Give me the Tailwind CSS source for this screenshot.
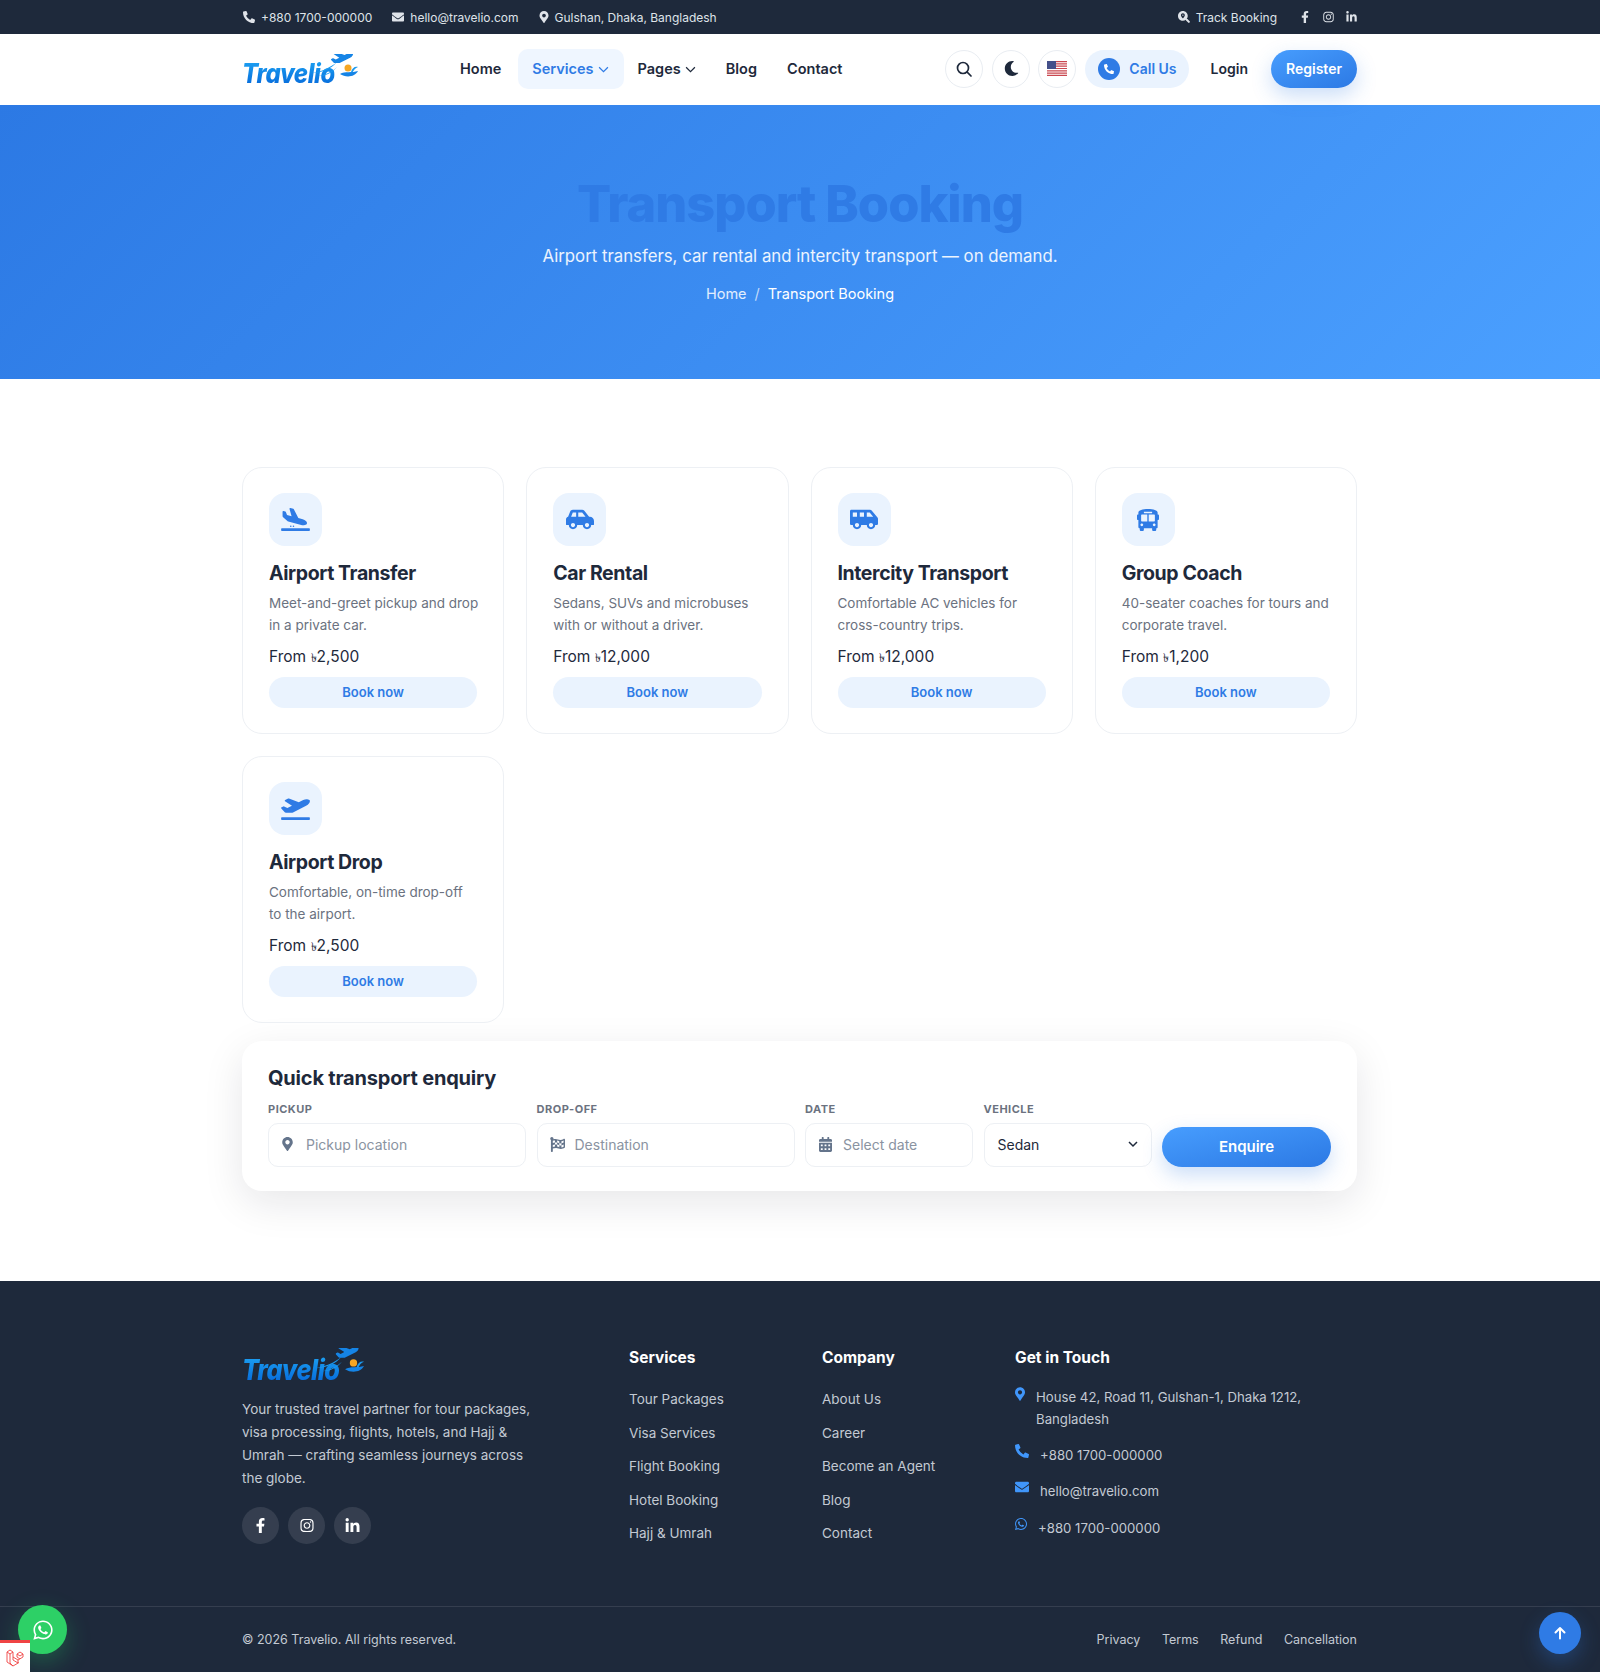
<!DOCTYPE html>
<html lang="en">

<head>
    <meta charset="UTF-8">
    <meta name="viewport" content="width=device-width, initial-scale=1.0">
    <title>Transport Booking - Travelio</title>
    <script src="https://cdn.jsdelivr.net/npm/@tailwindcss/browser@4"></script>
</head>

<body class="bg-white font-['Inter',sans-serif] text-[#1e293b] h-[1672px] overflow-hidden relative">
    <svg class="hidden">
        <symbol id="i-phone" viewBox="0 0 512 512"><path fill="currentColor" d="M497.39 361.8l-112-48a24 24 0 0 0-28 6.9l-49.6 60.6A370.66 370.66 0 0 1 130.6 204.11l60.6-49.6a23.94 23.94 0 0 0 6.9-28l-48-112A24.16 24.16 0 0 0 122.6.61l-104 24A24 24 0 0 0 0 48c0 256.5 207.9 464 464 464a24 24 0 0 0 23.4-18.6l24-104a24.29 24.29 0 0 0-14.01-27.6z"/></symbol>
        <symbol id="i-mail" viewBox="0 0 512 512"><path fill="currentColor" d="M502.3 190.8c3.9-3.1 9.7-.2 9.7 4.7V400c0 26.5-21.5 48-48 48H48c-26.5 0-48-21.5-48-48V195.6c0-5 5.7-7.8 9.7-4.7 22.4 17.4 52.1 39.5 154.1 113.6 21.1 15.4 56.7 47.8 92.2 47.6 35.7.3 72-32.8 92.3-47.6 102-74.1 131.6-96.3 154-113.7zM256 320c23.2.4 56.6-29.2 73.4-41.4 132.7-96.3 142.8-104.7 173.4-128.7 5.8-4.5 9.2-11.5 9.2-18.9v-19c0-26.5-21.5-48-48-48H48C21.5 64 0 85.5 0 112v19c0 7.4 3.4 14.3 9.2 18.9 30.6 23.9 40.7 32.4 173.4 128.7 16.8 12.2 50.2 41.8 73.4 41.4z"/></symbol>
        <symbol id="i-pin" viewBox="0 0 384 512"><path fill="currentColor" d="M172.268 501.67C26.97 291.031 0 268.413 0 192 0 85.961 85.961 0 192 0s192 85.961 192 192c0 76.413-26.97 99.031-172.268 309.67-9.535 13.774-29.93 13.773-39.464 0zM192 272c44.183 0 80-35.817 80-80s-35.817-80-80-80-80 35.817-80 80 35.817 80 80 80z"/></symbol>
        <symbol id="i-track" viewBox="0 0 512 512"><path fill="currentColor" d="M505 442.7L405.3 343c-4.5-4.5-10.6-7-17-7H372c27.6-35.3 44-79.7 44-128C416 93.1 322.9 0 208 0S0 93.1 0 208s93.1 208 208 208c48.3 0 92.7-16.4 128-44v16.3c0 6.4 2.5 12.5 7 17l99.7 99.7c9.4 9.4 24.6 9.4 33.9 0l28.3-28.3c9.4-9.4 9.4-24.6.1-34z"/><path fill="#1e293b" d="M208 96c-46 0-84 37-84 83 0 38 56 106 76 130a10 10 0 0 0 16 0c20-24 76-92 76-130 0-46-38-83-84-83zm0 110a27 27 0 1 1 0-54 27 27 0 0 1 0 54z"/></symbol>
        <symbol id="i-fb" viewBox="0 0 320 512"><path fill="currentColor" d="M279.14 288l14.22-92.66h-88.91v-60.13c0-25.35 12.42-50.06 52.24-50.06h40.42V6.26S260.43 0 225.36 0c-73.22 0-121.08 44.38-121.08 124.72v70.62H22.89V288h81.39v224h100.17V288z"/></symbol>
        <symbol id="i-ig" viewBox="0 0 448 512"><path fill="currentColor" d="M224.1 141c-63.6 0-114.9 51.3-114.9 114.9s51.3 114.9 114.9 114.9S339 319.5 339 255.9 287.7 141 224.1 141zm0 189.6c-41.1 0-74.7-33.5-74.7-74.7s33.5-74.7 74.7-74.7 74.7 33.5 74.7 74.7-33.6 74.7-74.7 74.7zm146.4-194.3c0 14.9-12 26.8-26.8 26.8-14.9 0-26.8-12-26.8-26.8s12-26.8 26.8-26.8 26.8 12 26.8 26.8zm76.1 27.2c-1.7-35.9-9.9-67.7-36.2-93.9-26.2-26.2-58-34.4-93.9-36.2-37-2.1-147.9-2.1-184.9 0-35.8 1.7-67.6 9.9-93.9 36.1s-34.4 58-36.2 93.9c-2.1 37-2.1 147.9 0 184.9 1.7 35.9 9.9 67.7 36.2 93.9s58 34.4 93.9 36.2c37 2.1 147.9 2.1 184.9 0 35.9-1.7 67.7-9.9 93.9-36.2 26.2-26.2 34.4-58 36.2-93.9 2.1-37 2.1-147.8 0-184.8zM398.8 388c-7.8 19.6-22.9 34.7-42.6 42.6-29.5 11.7-99.5 9-132.1 9s-102.7 2.6-132.1-9c-19.6-7.8-34.7-22.9-42.6-42.6-11.7-29.5-9-99.5-9-132.1s-2.6-102.7 9-132.1c7.8-19.6 22.9-34.7 42.6-42.6 29.5-11.7 99.5-9 132.1-9s102.7-2.6 132.1 9c19.6 7.8 34.7 22.9 42.6 42.6 11.7 29.5 9 99.5 9 132.1s2.7 102.7-9 132.1z"/></symbol>
        <symbol id="i-in" viewBox="0 0 448 512"><path fill="currentColor" d="M100.28 448H7.4V148.9h92.88zM53.79 108.1C24.09 108.1 0 83.5 0 53.8a53.79 53.79 0 0 1 107.58 0c0 29.7-24.1 54.3-53.79 54.3zM447.9 448h-92.68V302.4c0-34.7-.7-79.2-48.29-79.2-48.29 0-55.69 37.7-55.69 76.7V448h-92.78V148.9h89.08v40.8h1.3c12.4-23.5 42.69-48.3 87.88-48.3 94 0 111.28 61.9 111.28 142.3V448z"/></symbol>
        <symbol id="i-wa" viewBox="0 0 448 512"><path fill="currentColor" d="M380.9 97.1C339 55.1 283.2 32 223.9 32c-122.4 0-222 99.6-222 222 0 39.1 10.2 77.3 29.6 111L0 480l117.7-30.9c32.4 17.7 68.9 27 106.1 27h.1c122.3 0 224.1-99.6 224.1-222 0-59.3-25.2-115-67.1-157zm-157 341.6c-33.2 0-65.7-8.9-94-25.7l-6.7-4-69.8 18.3L72 359.2l-4.4-7c-18.5-29.4-28.2-63.3-28.2-98.2 0-101.7 82.8-184.5 184.6-184.5 49.3 0 95.6 19.2 130.4 54.1 34.8 34.9 56.2 81.2 56.1 130.5 0 101.8-84.9 184.6-186.6 184.6zm101.2-138.2c-5.5-2.8-32.8-16.2-37.9-18-5.1-1.9-8.8-2.8-12.5 2.8-3.7 5.6-14.3 18-17.6 21.8-3.2 3.7-6.5 4.2-12 1.4-32.6-16.3-54-29.1-75.5-66-5.7-9.8 5.7-9.1 16.3-30.3 1.8-3.7.9-6.9-.5-9.7-1.4-2.8-12.5-30.1-17.1-41.2-4.5-10.8-9.1-9.3-12.5-9.5-3.2-.2-6.9-.2-10.6-.2-3.7 0-9.7 1.4-14.8 6.9-5.1 5.6-19.4 19-19.4 46.3 0 27.3 19.9 53.7 22.6 57.4 2.8 3.7 39.1 59.7 94.8 83.8 35.2 15.2 49 16.5 66.6 13.9 10.7-1.6 32.8-13.4 37.4-26.4 4.6-13 4.6-24.1 3.2-26.4-1.3-2.5-5-3.9-10.5-6.6z"/></symbol>
        <symbol id="i-arrival" viewBox="0 0 640 512"><path fill="currentColor" d="M624 448H16c-8.84 0-16 7.16-16 16v32c0 8.84 7.16 16 16 16h608c8.84 0 16-7.16 16-16v-32c0-8.84-7.16-16-16-16zM44.81 205.66l88.74 80a62.607 62.607 0 0 0 25.47 13.93l287.6 78.35c26.48 7.21 54.56 8.72 81 1.36 29.67-8.27 43.44-21.21 47.25-35.71 3.83-14.5-1.73-32.71-23.37-54.96-19.28-19.82-44.35-32.79-70.83-40l-97.51-26.56L282.8 30.22c-1.51-5.81-5.95-10.35-11.66-11.91L206.05.58c-10.56-2.88-20.9 5.32-20.71 16.44l47.92 164.21-102.2-27.84-27.59-67.88c-1.93-4.89-6.01-8.57-11.02-9.93L52.72 64.75c-10.34-2.82-20.53 5-20.72 15.88l.23 101.78c.19 8.91 6.03 17.34 12.58 23.25z"/><circle cx="215" cy="405" r="17" fill="currentColor"/><circle cx="275" cy="405" r="17" fill="currentColor"/></symbol>
        <symbol id="i-departure" viewBox="0 0 640 512"><path fill="currentColor" d="M624 448H16c-8.84 0-16 7.16-16 16v32c0 8.84 7.16 16 16 16h608c8.84 0 16-7.16 16-16v-32c0-8.84-7.16-16-16-16zM80.55 341.27c6.28 6.84 15.1 10.72 24.33 10.71l130.54-.18a65.62 65.62 0 0 0 29.64-7.12l290.96-147.65c26.74-13.57 50.71-32.94 67.02-58.31 18.31-28.48 20.3-49.09 13.07-63.65-7.21-14.57-24.74-25.27-58.25-27.45-29.85-1.94-59.54 5.92-86.28 19.48l-98.51 49.99-218.7-82.06a17.799 17.799 0 0 0-18-1.11L90.62 67.29c-10.67 5.41-13.25 19.65-5.17 28.53l156.22 98.1-103.21 52.38-72.35-36.47a17.804 17.804 0 0 0-16.07.02L9.91 230.22c-10.44 5.3-13.19 19.12-5.57 28.08l76.21 82.97z"/></symbol>
        <symbol id="i-car" viewBox="0 0 640 512"><path fill="currentColor" d="M544 192h-16L419.22 56.02A64.025 64.025 0 0 0 369.24 32H155.33c-26.17 0-49.7 15.93-59.42 40.23L48 194.26C20.44 201.4 0 226.21 0 256v112c0 8.84 7.16 16 16 16h48c0 53.02 42.98 96 96 96s96-42.98 96-96h128c0 53.02 42.98 96 96 96s96-42.98 96-96h48c8.84 0 16-7.16 16-16v-80c0-53.02-42.98-96-96-96zM160 432c-26.47 0-48-21.53-48-48s21.53-48 48-48 48 21.53 48 48-21.53 48-48 48zm72-240H116.93l38.4-96H232v96zm48 0V96h89.24l76.8 96H280zm200 240c-26.47 0-48-21.53-48-48s21.53-48 48-48 48 21.53 48 48-21.53 48-48 48z"/></symbol>
        <symbol id="i-van" viewBox="0 0 640 512"><path fill="currentColor" d="M628.88 210.65L494.39 49.27A48.01 48.01 0 0 0 457.52 32H32C14.33 32 0 46.33 0 64v288c0 17.67 14.33 32 32 32h32c0 53.02 42.98 96 96 96s96-42.98 96-96h128c0 53.02 42.98 96 96 96s96-42.98 96-96h32c17.67 0 32-14.33 32-32V241.38c0-11.23-3.94-22.1-11.12-30.73zM64 192V96h96v96H64zm96 240c-26.51 0-48-21.49-48-48s21.49-48 48-48 48 21.49 48 48-21.49 48-48 48zm160-240h-96V96h96v96zm160 240c-26.51 0-48-21.49-48-48s21.49-48 48-48 48 21.49 48 48-21.49 48-48 48zm-96-240V96h66.02l80 96H384z"/></symbol>
        <symbol id="i-bus" viewBox="0 0 512 512"><path fill="currentColor" d="M488 128h-8V80c0-44.8-99.2-80-224-80S32 35.2 32 80v48h-8c-13.25 0-24 10.74-24 24v80c0 13.25 10.75 24 24 24h8v160c0 17.67 14.33 32 32 32v32c0 17.67 14.33 32 32 32h32c17.67 0 32-14.33 32-32v-32h192v32c0 17.67 14.33 32 32 32h32c17.67 0 32-14.33 32-32v-32h6.4c16 0 25.6-12.8 25.6-25.6V256h8c13.25 0 24-10.75 24-24v-80c0-13.26-10.75-24-24-24zM160 72c0-4.42 3.58-8 8-8h176c4.42 0 8 3.58 8 8v16c0 4.42-3.58 8-8 8H168c-4.42 0-8-3.58-8-8V72zm-48 328c-17.67 0-32-14.33-32-32s14.33-32 32-32 32 14.33 32 32-14.33 32-32 32zm128-112H112c-8.84 0-16-7.16-16-16V144c0-8.84 7.16-16 16-16h128v160zm32 0V128h128c8.84 0 16 7.16 16 16v128c0 8.84-7.16 16-16 16H272zm128 112c-17.67 0-32-14.33-32-32s14.33-32 32-32 32 14.33 32 32-14.33 32-32 32z"/></symbol>
        <symbol id="i-flag" viewBox="0 0 512 512"><path fill="currentColor" d="M243.2 189.9V258c26.1 5.9 49.3 15.6 73.6 22.3v-68.2c-26-5.8-49.4-15.5-73.6-22.2zm223.3-123c-34.3 15.9-76.5 31.9-117 31.9C296 98.8 251.7 64 184.3 64c-25 0-47.3 4.4-68 12 2.8-7.3 4.1-15.2 3.6-23.6C118.1 24 94.8 1.2 66.3 0 34.3-1.3 8 24.3 8 56c0 19 9.5 35.8 24 45.9V488c0 13.3 10.7 24 24 24h16c13.3 0 24-10.7 24-24v-94.4c28.3-12.1 63.6-22.1 114.4-22.1 53.6 0 97.8 34.8 165.2 34.8 48.2 0 86.7-16.3 122.5-40.9 8.7-6 13.8-15.8 13.8-26.3V89.6c0-23.4-24.2-38.6-45.4-28.7zM169.6 325.5c-25.8 2.7-50 8.2-73.6 16.6v-70.5c26.2-9.3 47.5-15 73.6-17.4v71.3zM464 191c-23.6 9.8-46.3 19.5-73.6 23.9V286c24.8-3.4 51.4-11.8 73.6-26v70c-25.1 16.1-48.5 24.7-73.6 27.1V286c-27 3.7-47.9 1.5-73.6-5.7v67.4c-23.9-7.4-47.3-16.7-73.6-21.3V258c-19.7-4.4-40.8-6.8-73.6-3.8v-70c-29 2.7-52.8 8.7-73.6 17.4v-70c26.5-11.8 46.2-14.3 73.6-14.5v70.1c22.3-2.5 43-2 73.6 4.6v-68.3c22.8 6.3 46.6 15.3 73.6 22.6v68.3c26.2 6 47.8 5.6 73.6 1.4v-70.2c27.5-4.4 50.6-13.4 73.6-23.8V191z"/></symbol>
        <symbol id="i-cal" viewBox="0 0 448 512"><path fill="currentColor" d="M0 464c0 26.5 21.5 48 48 48h352c26.5 0 48-21.5 48-48V192H0v272zm320-196c0-6.6 5.4-12 12-12h40c6.6 0 12 5.4 12 12v40c0 6.6-5.4 12-12 12h-40c-6.6 0-12-5.4-12-12v-40zm0 128c0-6.6 5.4-12 12-12h40c6.6 0 12 5.4 12 12v40c0 6.6-5.4 12-12 12h-40c-6.6 0-12-5.4-12-12v-40zM192 268c0-6.6 5.4-12 12-12h40c6.6 0 12 5.4 12 12v40c0 6.6-5.4 12-12 12h-40c-6.6 0-12-5.4-12-12v-40zm0 128c0-6.6 5.4-12 12-12h40c6.6 0 12 5.4 12 12v40c0 6.6-5.4 12-12 12h-40c-6.6 0-12-5.4-12-12v-40zM64 268c0-6.6 5.4-12 12-12h40c6.6 0 12 5.4 12 12v40c0 6.6-5.4 12-12 12H76c-6.6 0-12-5.4-12-12v-40zm0 128c0-6.6 5.4-12 12-12h40c6.6 0 12 5.4 12 12v40c0 6.6-5.4 12-12 12H76c-6.6 0-12-5.4-12-12v-40zM400 64h-48V16c0-8.8-7.2-16-16-16h-32c-8.8 0-16 7.2-16 16v48H160V16c0-8.8-7.2-16-16-16h-32c-8.8 0-16 7.2-16 16v48H48C21.5 64 0 85.5 0 112v48h448v-48c0-26.5-21.5-48-48-48z"/></symbol>
        <symbol id="i-plane" viewBox="0 0 640 512"><path fill="currentColor" d="M80.55 341.27c6.28 6.84 15.1 10.72 24.33 10.71l130.54-.18a65.62 65.62 0 0 0 29.64-7.12l290.96-147.65c26.74-13.57 50.71-32.94 67.02-58.31 18.31-28.48 20.3-49.09 13.07-63.65-7.21-14.57-24.74-25.27-58.25-27.45-29.85-1.94-59.54 5.92-86.28 19.48l-98.51 49.99-218.7-82.06a17.799 17.799 0 0 0-18-1.11L90.62 67.29c-10.67 5.41-13.25 19.65-5.17 28.53l156.22 98.1-103.21 52.38-72.35-36.47a17.804 17.804 0 0 0-16.07.02L9.91 230.22c-10.44 5.3-13.19 19.12-5.57 28.08l76.21 82.97z"/></symbol>
        <symbol id="i-logomark" viewBox="0 0 116 32">
            <path d="M70 19 C78 18 88 14 95 8 C89 15 80 19 70 19Z" fill="#1c9bf0" />
            <path d="M76 22 C83 21 90 18 95 13 C90 19 84 22 76 22Z" fill="#1c9bf0" />
            <use href="#i-plane" x="89" y="-3" width="22" height="17.600" color="#1584e6" />
            <circle cx="106" cy="14" r="3.500" fill="#f5a623" />
            <path d="M98 20 C103 17 110 19 116 17 C113 23 104 24 98 20Z" fill="#1584e6" />
            <path d="M109 18 C110 14 113 12 116 13 C113 14 112 16 110.500 18.500Z" fill="#1c9bf0" />
        </symbol>
    </svg>

    <!-- Barra superior -->
    <div class="bg-[#1e293b] h-[34px] text-[12px] text-[#dfe3e9]">
        <div class="w-[1116px] mx-auto pl-px h-full flex items-center justify-between">
            <div class="flex items-center">
                <svg class="w-3 h-3 mr-[6px]"><use href="#i-phone" /></svg>
                <span class="mr-5 pt-px">+880 1700-000000</span>
                <svg class="w-3 h-3 mr-[6px]"><use href="#i-mail" /></svg>
                <span class="mr-5 pt-px">hello@travelio.com</span>
                <svg class="w-[10px] h-3 mr-[6px]"><use href="#i-pin" /></svg>
                <span class="pt-px">Gulshan, Dhaka, Bangladesh</span>
            </div>
            <div class="flex items-center pr-px">
                <svg class="w-3 h-3 mr-[6px]"><use href="#i-track" /></svg>
                <span class="mr-6 pt-px">Track Booking</span>
                <svg class="w-2 h-3 mr-[14px]"><use href="#i-fb" /></svg>
                <svg class="w-[11px] h-3 mr-[12px]"><use href="#i-ig" /></svg>
                <svg class="w-[11px] h-3"><use href="#i-in" /></svg>
            </div>
        </div>
    </div>

    <!-- Navegación -->
    <header class="bg-white h-[71px]">
        <div class="w-[1116px] mx-auto h-full flex items-center">
            <div class="relative w-[116px] h-[32px] shrink-0">
                <span class="absolute left-0 bottom-[-5px] origin-left scale-x-[0.89] text-[27px] leading-[34px] font-extrabold italic tracking-[-0.5px] text-transparent bg-clip-text bg-gradient-to-b from-[#22a8f5] to-[#0a5fd6]">Travelio</span>
                <svg class="absolute left-0 top-0 w-[116px] h-[32px]"><use href="#i-logomark" /></svg>
            </div>
            <nav class="flex items-center ml-[88px] mb-px text-[14.500px] font-semibold">
                <a class="px-[14px]">Home</a>
                <a class="h-10 pl-[14px] pr-[15px] ml-[3px] rounded-[10px] bg-[#eff6ff] text-[#2f7be5] flex items-center gap-[4px]">Services
                    <svg class="w-[11px] h-[11px]" viewBox="0 0 10 10" fill="none" stroke="currentColor" stroke-width="1.100"><path d="M1 3l4 4 4-4" /></svg>
                </a>
                <a class="pl-[14px] pr-[15px] flex items-center gap-[4px]">Pages
                    <svg class="w-[11px] h-[11px]" viewBox="0 0 10 10" fill="none" stroke="currentColor" stroke-width="1.100"><path d="M1 3l4 4 4-4" /></svg>
                </a>
                <a class="px-[15px]">Blog</a>
                <a class="pl-[15px]">Contact</a>
            </nav>
            <div class="flex items-center ml-auto mb-[2px] pr-px">
                <button class="w-[38px] h-[38px] rounded-full border border-[#e9edf2] flex items-center justify-center">
                    <svg class="w-4 h-4" viewBox="0 0 16 16" fill="none" stroke="currentColor" stroke-width="1.700" stroke-linecap="round"><circle cx="7" cy="7" r="5.500" /><path d="M11.200 11.200L15 15" /></svg>
                </button>
                <button class="w-[38px] h-[38px] ml-[9px] rounded-full border border-[#e9edf2] flex items-center justify-center">
                    <svg class="w-[15px] h-[15px]" viewBox="0 0 512 512"><path fill="currentColor" d="M283.211 512c78.962 0 151.079-35.925 198.857-94.792 7.068-8.708-.639-21.43-11.562-19.35-124.203 23.654-238.262-71.576-238.262-196.954 0-72.222 38.662-138.635 101.498-174.394 9.686-5.512 7.25-20.197-3.756-22.23A258.156 258.156 0 0 0 283.211 0c-141.309 0-256 114.511-256 256 0 141.309 114.511 256 256 256z" /></svg>
                </button>
                <button class="w-[38px] h-[38px] ml-[8px] rounded-full border border-[#e9edf2] flex items-center justify-center">
                    <svg class="w-5 h-[15px]" viewBox="0 0 20 15">
                        <rect width="20" height="15" fill="#fff" />
                        <path d="M0 0h20v1.200H0zM0 2.300h20v1.200H0zM0 4.600h20v1.200H0zM0 6.900h20v1.200H0zM0 9.200h20v1.200H0zM0 11.500h20v1.200H0zM0 13.800h20V15H0z" fill="#c9474f" />
                        <rect width="9" height="8" fill="#44508a" />
                    </svg>
                </button>
                <a class="h-[38px] ml-[9px] pl-[13px] pr-[12px] rounded-full bg-[#eaf3fe] text-[#2f7be5] text-[14px] font-semibold flex items-center gap-[9px]">
                    <span class="w-[22px] h-[22px] rounded-full bg-[#2f7be5] text-white flex items-center justify-center">
                        <svg class="w-[10px] h-[10px]"><use href="#i-phone" /></svg>
                    </span>
                    Call Us
                </a>
                <a class="ml-[22px] text-[14px] font-semibold">Login</a>
                <a class="ml-[23px] h-[38px] w-[86px] rounded-full bg-gradient-to-br from-[#479dfe] to-[#2c79e4] text-white text-[14px] font-semibold flex items-center justify-center shadow-[0_8px_20px_rgba(47,123,229,0.25)]">Register</a>
            </div>
        </div>
    </header>

    <!-- Cabecera -->
    <section class="h-[274px] bg-[linear-gradient(135deg,#2c79e4,#4ba0ff)] text-center pt-[68px]">
        <h1 class="text-[50.500px] leading-[62px] font-extrabold tracking-[-1px] text-[#2f7be5]">Transport Booking</h1>
        <p class="mt-[7px] text-[16.800px] leading-[28px] text-white/90">Airport transfers, car rental and intercity transport — on demand.</p>
        <p class="mt-[12px] text-[14.500px] leading-[24px] text-white"><span class="text-white/85">Home</span><span class="mx-2 text-white/70">/</span>Transport Booking</p>
    </section>

    <!-- Servicios -->
    <main class="w-[1116px] mx-auto pr-px pt-[88px]">
        <div class="grid grid-cols-4 gap-[22px]">
            <article class="h-[267px] border border-[#edf0f4] rounded-[20px] p-[26px] pt-[25px]">
                <div class="w-[53px] h-[53px] rounded-2xl bg-[#eaf3fe] text-[#2f7be5] flex items-center justify-center"><svg class="w-[29px] h-[23px]"><use href="#i-arrival" /></svg></div>
                <h3 class="mt-[12px] text-[19.500px] leading-[30px] font-bold tracking-[-0.4px]">Airport Transfer</h3>
                <p class="mt-[4px] -mr-1 text-[13.500px] leading-[22px] text-[#6b7280]">Meet-and-greet pickup and drop in a private car.</p>
                <p class="mt-[8px] text-[15.500px] leading-[26px]">From <span class="text-[12px]">৳</span>2,500</p>
                <a class="mt-[6px] h-[31px] rounded-full bg-[#eaf3fe] text-[#2f7be5] text-[13px] font-semibold flex items-center justify-center">Book now</a>
            </article>
            <article class="h-[267px] border border-[#edf0f4] rounded-[20px] p-[26px] pt-[25px]">
                <div class="w-[53px] h-[53px] rounded-2xl bg-[#eaf3fe] text-[#2f7be5] flex items-center justify-center"><svg class="w-[28px] h-[23px]"><use href="#i-car" /></svg></div>
                <h3 class="mt-[12px] text-[19.500px] leading-[30px] font-bold tracking-[-0.4px]">Car Rental</h3>
                <p class="mt-[4px] text-[13.500px] leading-[22px] text-[#6b7280]">Sedans, SUVs and microbuses with or without a driver.</p>
                <p class="mt-[8px] text-[15.500px] leading-[26px]">From <span class="text-[12px]">৳</span>12,000</p>
                <a class="mt-[6px] h-[31px] rounded-full bg-[#eaf3fe] text-[#2f7be5] text-[13px] font-semibold flex items-center justify-center">Book now</a>
            </article>
            <article class="h-[267px] border border-[#edf0f4] rounded-[20px] p-[26px] pt-[25px]">
                <div class="w-[53px] h-[53px] rounded-2xl bg-[#eaf3fe] text-[#2f7be5] flex items-center justify-center"><svg class="w-[28px] h-[23px]"><use href="#i-van" /></svg></div>
                <h3 class="mt-[12px] text-[19.500px] leading-[30px] font-bold tracking-[-0.4px]">Intercity Transport</h3>
                <p class="mt-[4px] text-[13.500px] leading-[22px] text-[#6b7280]">Comfortable AC vehicles for cross-country trips.</p>
                <p class="mt-[8px] text-[15.500px] leading-[26px]">From <span class="text-[12px]">৳</span>12,000</p>
                <a class="mt-[6px] h-[31px] rounded-full bg-[#eaf3fe] text-[#2f7be5] text-[13px] font-semibold flex items-center justify-center">Book now</a>
            </article>
            <article class="h-[267px] border border-[#edf0f4] rounded-[20px] p-[26px] pt-[25px]">
                <div class="w-[53px] h-[53px] rounded-2xl bg-[#eaf3fe] text-[#2f7be5] flex items-center justify-center"><svg class="w-[22px] h-[22px]"><use href="#i-bus" /></svg></div>
                <h3 class="mt-[12px] text-[19.500px] leading-[30px] font-bold tracking-[-0.4px]">Group Coach</h3>
                <p class="mt-[4px] text-[13.500px] leading-[22px] text-[#6b7280]">40-seater coaches for tours and corporate travel.</p>
                <p class="mt-[8px] text-[15.500px] leading-[26px]">From <span class="text-[12px]">৳</span>1,200</p>
                <a class="mt-[6px] h-[31px] rounded-full bg-[#eaf3fe] text-[#2f7be5] text-[13px] font-semibold flex items-center justify-center">Book now</a>
            </article>
            <article class="h-[267px] border border-[#edf0f4] rounded-[20px] p-[26px] pt-[25px]">
                <div class="w-[53px] h-[53px] rounded-2xl bg-[#eaf3fe] text-[#2f7be5] flex items-center justify-center"><svg class="w-[29px] h-[23px]"><use href="#i-departure" /></svg></div>
                <h3 class="mt-[12px] text-[19.500px] leading-[30px] font-bold tracking-[-0.4px]">Airport Drop</h3>
                <p class="mt-[4px] text-[13.500px] leading-[22px] text-[#6b7280]">Comfortable, on-time drop-off to the airport.</p>
                <p class="mt-[8px] text-[15.500px] leading-[26px]">From <span class="text-[12px]">৳</span>2,500</p>
                <a class="mt-[6px] h-[31px] rounded-full bg-[#eaf3fe] text-[#2f7be5] text-[13px] font-semibold flex items-center justify-center">Book now</a>
            </article>
        </div>

        <!-- Consulta rápida -->
        <form class="mt-[18px] h-[150px] rounded-[20px] bg-white px-[26px] pt-[22px] shadow-[0_12px_40px_rgba(15,23,42,0.10)]">
            <h3 class="text-[20px] leading-[30px] font-bold tracking-[-0.2px]">Quick transport enquiry</h3>
            <div class="mt-[8px] grid grid-cols-[258px_258px_168px_168px_1fr] gap-x-[10.500px] items-end">
                <label class="block">
                    <span class="block text-[11px] leading-[16px] font-bold tracking-[0.5px] text-[#6b7280] mb-[6px]">PICKUP</span>
                    <span class="h-[44px] pb-[2px] border border-[#edf0f4] rounded-[10px] flex items-center pl-[13px] text-[14px] text-[#8a93a1]">
                        <svg class="w-[11px] h-[14px] mr-[13px] text-[#64748b]"><use href="#i-pin" /></svg>Pickup location
                    </span>
                </label>
                <label class="block">
                    <span class="block text-[11px] leading-[16px] font-bold tracking-[0.5px] text-[#6b7280] mb-[6px]">DROP-OFF</span>
                    <span class="h-[44px] pb-[2px] border border-[#edf0f4] rounded-[10px] flex items-center pl-[12px] text-[14px] text-[#8a93a1]">
                        <svg class="w-[15px] h-[15px] mr-[10px] text-[#64748b]"><use href="#i-flag" /></svg>Destination
                    </span>
                </label>
                <label class="block">
                    <span class="block text-[11px] leading-[16px] font-bold tracking-[0.5px] text-[#6b7280] mb-[6px]">DATE</span>
                    <span class="h-[44px] pb-[2px] border border-[#edf0f4] rounded-[10px] flex items-center pl-[13px] text-[14px] text-[#8a93a1]">
                        <svg class="w-[13px] h-[15px] mr-[11px] text-[#64748b]"><use href="#i-cal" /></svg>Select date
                    </span>
                </label>
                <label class="block">
                    <span class="block text-[11px] leading-[16px] font-bold tracking-[0.5px] text-[#6b7280] mb-[6px]">VEHICLE</span>
                    <span class="h-[44px] pb-[2px] border border-[#edf0f4] rounded-[10px] flex items-center justify-between pl-[13px] pr-[13px] text-[14px]">
                        Sedan
                        <svg class="w-[10px] h-[10px]" viewBox="0 0 10 10" fill="none" stroke="currentColor" stroke-width="1.500"><path d="M1 3l4 4 4-4" /></svg>
                    </span>
                </label>
                <button type="button" class="h-[40px] rounded-full bg-gradient-to-br from-[#479dfe] to-[#2c79e4] text-white text-[15px] font-semibold shadow-[0_8px_20px_rgba(47,123,229,0.25)]">Enquire</button>
            </div>
        </form>
    </main>

    <!-- Pie -->
    <footer class="absolute left-0 right-0 top-[1281px] bottom-0 bg-[#1e293b] text-[#c3c9d3] text-[13.500px]">
        <div class="w-[1116px] mx-auto h-[325px] pt-[62px] grid grid-cols-[387px_193px_193px_1fr]">
            <div>
                <div class="relative w-[122px] h-[37px] mt-[5px]">
                    <span class="absolute left-0 bottom-[-3px] origin-left scale-x-[0.9] text-[28px] leading-[36px] font-extrabold italic tracking-[-0.5px] text-transparent bg-clip-text bg-gradient-to-b from-[#22a8f5] to-[#0a5fd6]">Travelio</span>
                    <svg class="absolute left-0 top-0 w-[122px] h-[34px]"><use href="#i-logomark" /></svg>
                </div>
                <p class="mt-[13px] w-[300px] leading-[23px]">Your trusted travel partner for tour packages, visa processing, flights, hotels, and Hajj &amp; Umrah — crafting seamless journeys across the globe.</p>
                <div class="mt-[17px] flex gap-[9px] text-white">
                    <a class="w-[37px] h-[37px] rounded-full bg-white/10 flex items-center justify-center"><svg class="w-[11px] h-[15px]"><use href="#i-fb" /></svg></a>
                    <a class="w-[37px] h-[37px] rounded-full bg-white/10 flex items-center justify-center"><svg class="w-[14px] h-[15px]"><use href="#i-ig" /></svg></a>
                    <a class="w-[37px] h-[37px] rounded-full bg-white/10 flex items-center justify-center"><svg class="w-[15px] h-[16px]"><use href="#i-in" /></svg></a>
                </div>
            </div>
            <div>
                <h4 class="text-[15.500px] leading-[30px] font-bold text-white">Services</h4>
                <ul class="mt-[16px] space-y-[12.600px] leading-[21px]">
                    <li>Tour Packages</li>
                    <li>Visa Services</li>
                    <li>Flight Booking</li>
                    <li>Hotel Booking</li>
                    <li>Hajj &amp; Umrah</li>
                </ul>
            </div>
            <div>
                <h4 class="text-[15.500px] leading-[30px] font-bold text-white">Company</h4>
                <ul class="mt-[16px] space-y-[12.600px] leading-[21px]">
                    <li>About Us</li>
                    <li>Career</li>
                    <li>Become an Agent</li>
                    <li>Blog</li>
                    <li>Contact</li>
                </ul>
            </div>
            <div>
                <h4 class="text-[15.500px] leading-[30px] font-bold text-white">Get in Touch</h4>
                <ul class="mt-[13px] leading-[22px] text-[13.200px]">
                    <li class="flex">
                        <svg class="w-[10px] h-[14px] mr-[11px] mt-[1px] shrink-0 text-[#4096fb]"><use href="#i-pin" /></svg>
                        <span class="w-[290px]">House 42, Road 11, Gulshan-1, Dhaka 1212, Bangladesh</span>
                    </li>
                    <li class="flex mt-[14px]">
                        <svg class="w-[14px] h-[14px] mr-[11px] shrink-0 text-[#4096fb]"><use href="#i-phone" /></svg>
                        <span>+880 1700-000000</span>
                    </li>
                    <li class="flex mt-[14px]">
                        <svg class="w-[14px] h-[14px] mr-[11px] shrink-0 text-[#4096fb]"><use href="#i-mail" /></svg>
                        <span>hello@travelio.com</span>
                    </li>
                    <li class="flex mt-[15px]">
                        <svg class="w-[12px] h-[14px] mr-[11px] shrink-0 text-[#4096fb]"><use href="#i-wa" /></svg>
                        <span>+880 1700-000000</span>
                    </li>
                </ul>
            </div>
        </div>
        <div class="border-t border-white/10">
            <div class="w-[1116px] mx-auto pr-px pt-[23px] flex justify-between text-[12.500px] leading-[20px]">
                <span>© 2026 Travelio. All rights reserved.</span>
                <div class="flex gap-[21.500px]">
                    <a>Privacy</a>
                    <a>Terms</a>
                    <a>Refund</a>
                    <a>Cancellation</a>
                </div>
            </div>
        </div>
    </footer>

    <!-- Botones flotantes -->
    <a class="absolute left-[18px] top-[1605px] w-[49px] h-[49px] rounded-full bg-[#2dd066] text-white flex items-center justify-center shadow-[0_8px_24px_rgba(37,211,102,0.3)]">
        <svg class="w-5 h-[22px]"><use href="#i-wa" /></svg>
    </a>
    <div class="absolute left-0 top-[1640px] w-[30px] h-[32px] bg-white border-t-[3px] border-[#ef4444] flex items-center justify-center">
        <svg class="w-5 h-5" viewBox="0 0 20 20" fill="none" stroke="#ef4444" stroke-width="0.900" stroke-linejoin="round">
            <path d="M2 4l3-2 3 2v8l5 3v-3l-5-3M2 4v10l6 4 6-3.500M2 4l3 2 3-2M5 6v9l3 3M13 12l5-3V6l-3-2-3 2v3l3 2M15 8l3-2M12 6l3 2" />
        </svg>
    </div>
    <a class="absolute left-[1539px] top-[1612px] w-[42px] h-[42px] rounded-full bg-[#2f7be5] text-white flex items-center justify-center shadow-[0_8px_20px_rgba(47,123,229,0.3)]">
        <svg class="w-[14px] h-[14px]" viewBox="0 0 14 14" fill="none" stroke="currentColor" stroke-width="2" stroke-linecap="round" stroke-linejoin="round"><path d="M7 12.500V2M2.500 6.500L7 2l4.500 4.500" /></svg>
    </a>
</body>

</html>
